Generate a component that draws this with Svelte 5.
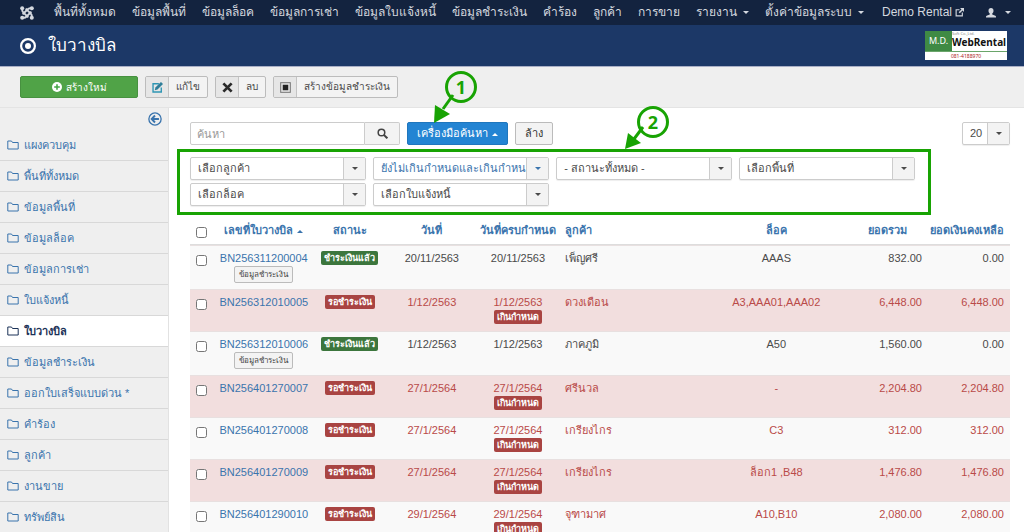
<script lang="ts">
  type Bill = {
    no: string;
    paid: boolean;
    date: string;
    overdue: boolean;
    customer: string;
    lot: string;
    total: string;
    remain: string;
    highlight: boolean;
  };

  let search = $state("");
  let limit = $state("20");
  let checkAll = $state(false);

  const menus = [
    { title: "พื้นที่ทั้งหมด" },
    { title: "ข้อมูลพื้นที่" },
    { title: "ข้อมูลล็อค" },
    { title: "ข้อมูลการเช่า" },
    { title: "ข้อมูลใบแจ้งหนี้" },
    { title: "ข้อมูลชำระเงิน" },
    { title: "คำร้อง" },
    { title: "ลูกค้า" },
    { title: "การขาย" },
    { title: "รายงาน", dropdown: true },
    { title: "ตั้งค่าข้อมูลระบบ", dropdown: true },
  ];

  const sidebar = [
    "แผงควบคุม",
    "พื้นที่ทั้งหมด",
    "ข้อมูลพื้นที่",
    "ข้อมูลล็อค",
    "ข้อมูลการเช่า",
    "ใบแจ้งหนี้",
    "ใบวางบิล",
    "ข้อมูลชำระเงิน",
    "ออกใบเสร็จแบบด่วน *",
    "คำร้อง",
    "ลูกค้า",
    "งานขาย",
    "ทรัพย์สิน",
  ];
  const current = "ใบวางบิล";

  const filters = [
    { label: "เลือกลูกค้า" },
    { label: "ยังไม่เกินกำหนดและเกินกำหนด", active: true },
    { label: "- สถานะทั้งหมด -" },
    { label: "เลือกพื้นที่" },
    { label: "เลือกล็อค" },
    { label: "เลือกใบแจ้งหนี้" },
  ];

  const bills: Bill[] = [
    { no: "BN256311200004", paid: true, date: "20/11/2563", overdue: false, customer: "เพ็ญศรี", lot: "AAAS", total: "832.00", remain: "0.00", highlight: false },
    { no: "BN256312010005", paid: false, date: "1/12/2563", overdue: true, customer: "ดวงเดือน", lot: "A3,AAA01,AAA02", total: "6,448.00", remain: "6,448.00", highlight: true },
    { no: "BN256312010006", paid: true, date: "1/12/2563", overdue: false, customer: "ภาคภูมิ", lot: "A50", total: "1,560.00", remain: "0.00", highlight: false },
    { no: "BN256401270007", paid: false, date: "27/1/2564", overdue: true, customer: "ศรีนวล", lot: "-", total: "2,204.80", remain: "2,204.80", highlight: true },
    { no: "BN256401270008", paid: false, date: "27/1/2564", overdue: true, customer: "เกรียงไกร", lot: "C3", total: "312.00", remain: "312.00", highlight: false },
    { no: "BN256401270009", paid: false, date: "27/1/2564", overdue: true, customer: "เกรียงไกร", lot: "ล็อก1 ,B48", total: "1,476.80", remain: "1,476.80", highlight: true },
    { no: "BN256401290010", paid: false, date: "29/1/2564", overdue: true, customer: "จุฑามาศ", lot: "A10,B10", total: "2,080.00", remain: "2,080.00", highlight: false },
  ];
</script>

<div class="page">
  <nav class="navbar">
    <a class="brand" href="#home" aria-label="Joomla">
      <svg viewBox="0 0 16 16" width="14" height="14">
        <g fill="none" stroke="currentColor" stroke-width="2.2">
          <path d="M2.500 3v1.500c0 1.500.500 2 1.500 3L9.500 13" />
          <path d="M13.500 13v-1.500c0-1.500-.500-2-1.500-3L6.500 3" />
          <path d="M13 2.500h-1.500c-1.500 0-2 .500-3 1.500L3 9.500" />
          <path d="M3 13.500h1.500c1.500 0 2-.500 3-1.500L13 6.500" />
        </g>
        <g fill="currentColor">
          <circle cx="2.500" cy="2.500" r="2.300" /><circle cx="13.500" cy="2.500" r="2.300" />
          <circle cx="2.500" cy="13.500" r="2.300" /><circle cx="13.500" cy="13.500" r="2.300" />
        </g>
      </svg>
    </a>
    {#each menus as menu}
      <a href="#menu">{menu.title}{#if menu.dropdown}<span class="caret"></span>{/if}</a>
    {/each}
    <a class="site" href="#site">
      Demo Rental
      <svg viewBox="0 0 16 16" width="9" height="9">
        <path d="M8 3H2v11h11V8" fill="none" stroke="currentColor" stroke-width="2" />
        <path d="M9 0h7v7l-2.500-2.500-5 5-2-2 5-5z" fill="currentColor" />
      </svg>
    </a>
    <a class="user" href="#user" aria-label="User menu">
      <svg viewBox="0 0 16 16" width="10" height="10">
        <path d="M8 0c2.600 0 4 1.800 4 4.300 0 2-1 3.700-2 4.500v1.700l5 1.800c.700.300 1 .900 1 1.700v1H0v-1c0-.800.300-1.400 1-1.700l5-1.800V8.800c-1-.800-2-2.500-2-4.500C4 1.800 5.400 0 8 0z" fill="currentColor" />
      </svg>
      <span class="caret"></span>
    </a>
  </nav>

  <header class="header">
    <svg class="title-icon" viewBox="0 0 16 16" width="16" height="16">
      <circle cx="8" cy="8" r="6.900" fill="none" stroke="#fff" stroke-width="2.200" />
      <circle cx="8" cy="8" r="3" fill="#fff" />
    </svg>
    <h1>ใบวางบิล</h1>
    <div class="logo">
      <div class="logo-top">
        <span class="logo-mark">M.D.</span>
        <span class="logo-text"><small>Soft Co.,Ltd.</small><b>WebRental</b></span>
      </div>
      <div class="logo-phone">081-4188970</div>
    </div>
  </header>

  <div class="toolbar">
    <button class="btn-new">
      <svg viewBox="0 0 16 16" width="10" height="10">
        <circle cx="8" cy="8" r="8" fill="#fff" />
        <path d="M8 3.500v9M3.500 8h9" stroke="#46a546" stroke-width="2.500" />
      </svg>
      สร้างใหม่
    </button>
    <button class="btn-tool">
      <span class="tool-icon">
        <svg viewBox="0 0 16 16" width="11" height="11">
          <path d="M10 2.500H1.500v12h12V8" fill="none" stroke="#2f96b4" stroke-width="2" />
          <path d="M13 0l3 3-8 8-4 1 1-4z" fill="#2f7e99" />
        </svg>
      </span>
      <span class="tool-text">แก้ไข</span>
    </button>
    <button class="btn-tool">
      <span class="tool-icon">
        <svg viewBox="0 0 16 16" width="11" height="11">
          <path d="M2 2l12 12M14 2L2 14" stroke="#2b2b2b" stroke-width="4" />
        </svg>
      </span>
      <span class="tool-text">ลบ</span>
    </button>
    <button class="btn-tool">
      <span class="tool-icon">
        <svg viewBox="0 0 16 16" width="11" height="11">
          <rect x="1" y="1" width="14" height="14" fill="none" stroke="#777" stroke-width="1.500" />
          <rect x="4" y="4" width="8" height="8" fill="#222" />
        </svg>
      </span>
      <span class="tool-text">สร้างข้อมูลชำระเงิน</span>
    </button>
  </div>

  <div class="body">
    <aside class="sidebar">
      <button class="collapse" aria-label="Toggle sidebar">
        <svg viewBox="0 0 16 16" width="14" height="14">
          <circle cx="8" cy="8" r="7" fill="none" stroke="currentColor" stroke-width="1.500" />
          <path d="M12.500 8H5M8 4L4.200 8 8 12" fill="none" stroke="currentColor" stroke-width="2.200" />
        </svg>
      </button>
      <ul>
        {#each sidebar as item}
          <li class:active={item === current}>
            <a href="#item">
              <svg viewBox="0 0 12 10" width="12" height="10">
                <path d="M.8 9V1h3.700l1 1.500h5.700V9z" fill="none" stroke="currentColor" />
              </svg>
              {item}
            </a>
          </li>
        {/each}
      </ul>
    </aside>

    <main class="content">
      <div class="search-tools">
        <div class="search">
          <input type="text" placeholder="ค้นหา" aria-label="ค้นหา" bind:value={search} />
          <button class="btn" aria-label="Search">
            <svg viewBox="0 0 16 16" width="11" height="11">
              <circle cx="6.500" cy="6.500" r="4.800" fill="none" stroke="#444" stroke-width="2.200" />
              <path d="M10 10l5 5" stroke="#444" stroke-width="3" />
            </svg>
          </button>
        </div>
        <button class="btn primary">เครื่องมือค้นหา<span class="caret up"></span></button>
        <button class="btn clear" onclick={() => (search = "")}>ล้าง</button>
        <div class="select limit">
          <select aria-label="Limit" bind:value={limit}>
            <option>20</option>
            <option>50</option>
            <option>100</option>
          </select>
          <span class="arrow"><span class="caret"></span></span>
        </div>
      </div>

      <div class="filters">
        {#each filters as filter}
          <div class="select" class:active={filter.active}>
            <select aria-label={filter.label}>
              <option>{filter.label}</option>
            </select>
            <span class="arrow"><span class="caret"></span></span>
          </div>
        {/each}
      </div>

      <table>
        <thead>
          <tr>
            <th class="col-check"><input type="checkbox" aria-label="Check all" bind:checked={checkAll} /></th>
            <th class="col-no"><a href="#sort">เลขที่ใบวางบิล<span class="caret up"></span></a></th>
            <th class="col-status"><a href="#sort">สถานะ</a></th>
            <th class="col-date"><a href="#sort">วันที่</a></th>
            <th class="col-due"><a href="#sort">วันที่ครบกำหนด</a></th>
            <th class="left"><a href="#sort">ลูกค้า</a></th>
            <th class="col-lot"><a href="#sort">ล็อค</a></th>
            <th class="col-total"><a href="#sort">ยอดรวม</a></th>
            <th class="col-remain right"><a href="#sort">ยอดเงินคงเหลือ</a></th>
          </tr>
        </thead>
        <tbody>
          {#each bills as bill}
            <tr class:error={bill.highlight} class:late={bill.overdue}>
              <td class="check"><input type="checkbox" aria-label={bill.no} checked={checkAll} /></td>
              <td>
                <a href="#bill">{bill.no}</a>
                {#if bill.paid}<button class="btn-mini">ข้อมูลชำระเงิน</button>{/if}
              </td>
              <td>
                <span class="label" class:success={bill.paid}>{bill.paid ? "ชำระเงินแล้ว" : "รอชำระเงิน"}</span>
              </td>
              <td>{bill.date}</td>
              <td>
                {bill.date}
                {#if bill.overdue}<br /><span class="label">เกินกำหนด</span>{/if}
              </td>
              <td class="left">{bill.customer}</td>
              <td>{bill.lot}</td>
              <td class="right">{bill.total}</td>
              <td class="right">{bill.remain}</td>
            </tr>
          {/each}
        </tbody>
      </table>

      <div class="marker first">
        <span>1</span>
        <svg viewBox="0 0 26 32" width="26" height="32">
          <path d="M20 0L10 14" stroke="#18a303" stroke-width="3" />
          <path d="M1 28L2 10l15 9z" fill="#18a303" />
        </svg>
      </div>
      <div class="marker second">
        <span>2</span>
        <svg viewBox="0 0 26 32" width="26" height="32">
          <path d="M18-3L9 9" stroke="#18a303" stroke-width="3" />
          <path d="M0 19L3 3l13 10z" fill="#18a303" />
        </svg>
      </div>
    </main>
  </div>
</div>

<style>
  :global(body) {
    margin: 0;
    background: #fff;
  }

  .page {
    height: 100vh;
    overflow: hidden;
    display: flex;
    flex-direction: column;
    font-family: "Liberation Sans", Arial, sans-serif;
    font-size: 11px;
    line-height: 15px;
    color: #4a4a4a;
  }

  a {
    color: #3a74ad;
    text-decoration: none;
  }

  button,
  input,
  select {
    font: inherit;
    color: inherit;
    margin: 0;
    box-sizing: border-box;
  }

  button {
    cursor: pointer;
  }

  .caret {
    display: inline-block;
    border: 3px solid transparent;
    border-top-color: currentColor;
    border-bottom: 0;
    vertical-align: middle;
    margin-left: 6px;
  }

  .caret.up {
    border-bottom: 3px solid currentColor;
    border-top: 0;
    margin-left: 4px;
  }

  .navbar {
    flex: none;
    height: 25px;
    padding: 0 13px 0 20px;
    display: flex;
    align-items: center;
    gap: 16px;
    background: #13233f;
    font-size: 12px;
    white-space: nowrap;
  }

  .navbar a {
    color: #d4d8df;
  }

  .navbar svg {
    vertical-align: middle;
  }

  .navbar .brand {
    line-height: 0;
    margin-right: 4px;
  }

  .navbar .site {
    margin-left: 2px;
  }

  .navbar .user {
    margin-left: auto;
  }

  .header {
    flex: none;
    height: 41px;
    padding: 0 17px 0 20px;
    display: flex;
    align-items: center;
    background: #1c3867;
    border-bottom: 1px solid #a9afc6;
    color: #fff;
  }

  .header h1 {
    margin: 0 auto 0 12px;
    font-size: 17px;
    line-height: 28px;
    font-weight: normal;
  }

  .logo {
    width: 82px;
    height: 29px;
    display: flex;
    flex-direction: column;
    background: #fff;
    font-family: "Noto Sans", sans-serif;
  }

  .logo-top {
    display: flex;
    height: 20px;
    border-bottom: 1px solid #6aa56a;
  }

  .logo-mark {
    width: 27px;
    background: #3f8a44;
    font-size: 9px;
    line-height: 20px;
    text-align: center;
  }

  .logo-text {
    color: #111;
    display: flex;
    flex-direction: column;
  }

  .logo-text small {
    font-size: 4px;
    line-height: 5px;
    color: #888;
  }

  .logo-text b {
    font-size: 10px;
    line-height: 12px;
  }

  .logo-phone {
    font-size: 5px;
    line-height: 8px;
    text-align: center;
    color: #a22;
  }

  .toolbar {
    flex: none;
    display: flex;
    gap: 7px;
    padding: 9px 20px;
    background: #efefef;
    border-bottom: 1px solid #e4e4e4;
    font-size: 10px;
  }

  .btn-new {
    width: 118px;
    height: 22px;
    padding: 0;
    display: flex;
    align-items: center;
    justify-content: center;
    gap: 4px;
    background: #50a347;
    border: 1px solid #479140;
    border-radius: 2px;
    color: #fff;
  }

  .btn-tool {
    height: 22px;
    padding: 0;
    display: flex;
    background: #f3f3f3;
    border: 1px solid #bcbcbc;
    border-radius: 2px;
    overflow: hidden;
  }

  .tool-icon {
    width: 23px;
    height: 20px;
    display: flex;
    align-items: center;
    justify-content: center;
    background: #e6e6e6;
    border-right: 1px solid #c4c4c4;
    box-sizing: border-box;
  }

  .tool-text {
    padding: 0 7px;
    line-height: 20px;
  }

  .body {
    flex: 1;
    min-height: 0;
    display: flex;
  }

  .sidebar {
    flex: none;
    width: 169px;
    box-sizing: border-box;
    background: #efefef;
    border-right: 1px solid #e2e2e2;
  }

  .collapse {
    display: flex;
    align-items: flex-start;
    height: 22px;
    margin-left: auto;
    padding: 4px 6px 0 0;
    background: none;
    border: 0;
    color: #3a74ad;
  }

  .sidebar ul {
    list-style: none;
    margin: 0;
    padding: 0;
  }

  .sidebar li {
    height: 31px;
    box-sizing: border-box;
    border-bottom: 1px solid #d8d8d8;
  }

  .sidebar li a {
    display: flex;
    align-items: center;
    gap: 5px;
    height: 30px;
    padding-left: 7px;
    white-space: nowrap;
  }

  .sidebar li.active {
    background: #fff;
  }

  .sidebar li.active a {
    color: #1c3258;
    font-weight: bold;
  }

  .content {
    position: relative;
    flex: 1;
    min-width: 0;
    padding: 14px 14px 0 21px;
  }

  .search-tools {
    display: flex;
    align-items: center;
    gap: 7px;
  }

  .search {
    display: flex;
    width: 210px;
  }

  .search input {
    flex: 1;
    min-width: 0;
    height: 23px;
    padding: 0 6px;
    border: 1px solid #ccc;
    border-radius: 2px 0 0 2px;
  }

  .search input::placeholder {
    color: #999;
  }

  .btn {
    height: 23px;
    padding: 0 9px;
    background: #f3f3f3;
    border: 1px solid #bbb;
    border-radius: 2px;
    color: #333;
    white-space: nowrap;
  }

  .search .btn {
    width: 35px;
    border-left: 0;
    border-color: #ccc;
    border-radius: 0 2px 2px 0;
    padding: 0;
    line-height: 0;
  }

  .btn.primary {
    background: #2384d3;
    border-color: #1f76bd;
    color: #fff;
  }

  .select {
    position: relative;
    height: 23px;
  }

  .select select {
    width: 100%;
    height: 23px;
    padding: 0 22px 0 7px;
    appearance: none;
    background: #fff;
    border: 1px solid #ccc;
    border-radius: 2px;
    box-shadow: 0 1px 1px #eee;
  }

  .select.active {
    color: #3a74ad;
  }

  .arrow {
    position: absolute;
    top: 1px;
    right: 1px;
    bottom: 1px;
    width: 21px;
    display: flex;
    align-items: center;
    justify-content: center;
    background: #f3f3f3;
    border-left: 1px solid #ccc;
    pointer-events: none;
  }

  .arrow .caret {
    margin: 0;
  }

  .limit {
    width: 48px;
    margin-left: auto;
  }

  .filters {
    width: 92%;
    box-sizing: border-box;
    margin: 4px 0 0 -13px;
    padding: 5px 13px 6px 10px;
    display: grid;
    grid-template-columns: repeat(4, 1fr);
    gap: 3px 7px;
    border: 3px solid #18a303;
  }

  table {
    width: 100%;
    table-layout: fixed;
    border-collapse: collapse;
    margin-top: 2px;
  }

  th,
  td {
    padding: 6px 0;
    text-align: center;
    vertical-align: top;
    box-sizing: border-box;
  }

  th {
    white-space: nowrap;
    border-bottom: 1px solid #ddd;
  }

  td {
    box-shadow: inset 0 1px #e8e0e0;
    background: #f9f9f9;
  }

  th input,
  td input {
    display: block;
    width: 11px;
    height: 11px;
    margin: 4px 0 0 6px;
  }

  .left {
    text-align: left;
    padding-left: 6px;
  }

  .right {
    text-align: right;
    padding-right: 6px;
  }

  .col-check {
    width: 3%;
  }

  .col-no {
    width: 12%;
  }

  .col-status {
    width: 9%;
  }

  .col-date {
    width: 11%;
  }

  .col-due {
    width: 10%;
  }

  .col-lot {
    width: 17%;
  }

  .col-total,
  .col-remain {
    width: 10%;
  }

  tr.error td {
    background: #f2dede;
  }

  tr.late td {
    color: #b94a48;
  }

  .label {
    display: inline-block;
    height: 14px;
    padding: 0 3px;
    background: #a94442;
    border-radius: 2px;
    color: #fff;
    font-size: 9px;
    line-height: 14px;
    font-weight: bold;
    vertical-align: top;
    white-space: nowrap;
  }

  .label.success {
    background: #3c763d;
  }

  .btn-mini {
    display: block;
    height: 17px;
    margin: 0 auto;
    padding: 0 4px;
    background: #f3f3f3;
    border: 1px solid #bbb;
    border-radius: 2px;
    color: #444;
    font-size: 8px;
    line-height: 15px;
    white-space: nowrap;
  }

  .marker {
    position: absolute;
    color: #18a303;
  }

  .marker span {
    display: block;
    width: 32px;
    height: 32px;
    box-sizing: border-box;
    border: 3px solid #18a303;
    border-radius: 50%;
    font-size: 18px;
    font-weight: bold;
    line-height: 26px;
    text-align: center;
    font-family: "Open Sans", sans-serif;
  }

  .marker svg {
    position: absolute;
    left: -12px;
    top: 24px;
    overflow: visible;
  }

  .marker.first {
    left: 276px;
    top: -37px;
  }

  .marker.second {
    left: 468px;
    top: -2px;
  }
</style>
